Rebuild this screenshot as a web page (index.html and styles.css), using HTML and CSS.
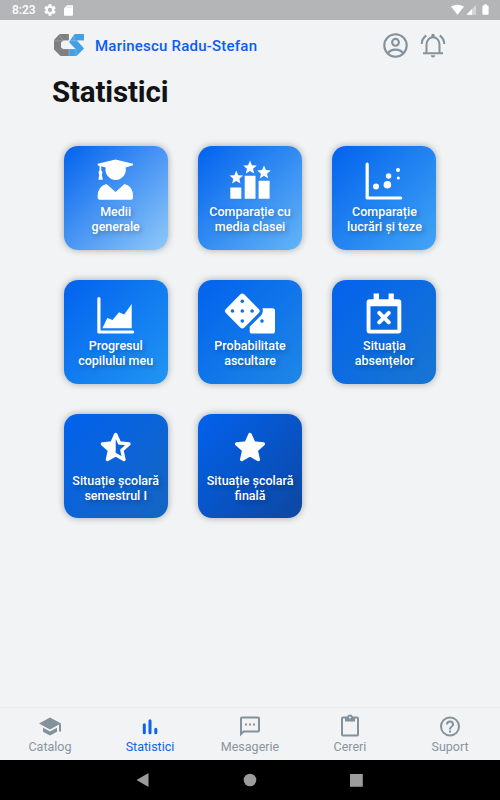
FILE: index.html
```
<!DOCTYPE html>
<html lang="ro">
<head>
<meta charset="utf-8">
<title>Statistici</title>
<link rel="stylesheet" href="styles.css">
</head>
<body>
<div class="statusbar">
  <span class="clock">8:23</span>
  <svg class="gear" width="12" height="12" viewBox="2 2 20 20"><path d="M19.14 12.94c.04-.3.06-.61.06-.94 0-.32-.02-.64-.07-.94l2.03-1.58a.49.49 0 0 0 .12-.61l-1.92-3.32a.49.49 0 0 0-.59-.22l-2.39.96c-.5-.38-1.03-.7-1.62-.94l-.36-2.54a.48.48 0 0 0-.48-.41h-3.84c-.24 0-.43.17-.47.41l-.36 2.54c-.59.24-1.13.57-1.62.94l-2.39-.96a.48.48 0 0 0-.59.22L2.74 8.87c-.12.21-.08.47.12.61l2.03 1.58c-.05.3-.09.63-.09.94s.02.64.07.94l-2.03 1.58a.49.49 0 0 0-.12.61l1.92 3.32c.12.22.37.29.59.22l2.39-.96c.5.38 1.03.7 1.62.94l.36 2.54c.05.24.24.41.48.41h3.84c.24 0 .44-.17.47-.41l.36-2.54c.59-.24 1.13-.56 1.62-.94l2.39.96c.22.08.47 0 .59-.22l1.92-3.32a.48.48 0 0 0-.12-.61zM12 15.6a3.6 3.6 0 1 1 0-7.2 3.6 3.6 0 0 1 0 7.2z"/></svg>
  <svg class="sd" width="9" height="11" viewBox="0 0 9 11"><path d="M3 .3h5.2q.8 0 .8.8v8.8q0 .8-.8.8H.8q-.8 0-.8-.8V3.3z"/><path class="sd-pins" d="M3.2 1.5v1.3M5 1.5v1.3M6.8 1.5v1.3"/></svg>
  <svg class="signals" width="38" height="12" viewBox="0 0 38 12"><path d="M0 2.600Q6.500-1.200 13 2.600L6.500 10.700z"/><path opacity=".45" d="M25 1v9.700H15.500z"/><path d="M21 5v5.700h-5.500z"/><path d="M33.200.2h2.600v1.200h1.100q.7 0 .7.700v8q0 .7-.7.700h-4.800q-.7 0-.7-.7v-8q0-.7.700-.7h1.100z"/></svg>
</div>

<header class="header">
  <svg class="logo" width="30" height="22" viewBox="0 0 30 22">
    <path fill="#808080" d="M5.500 0H15v6.500H9.500L7 8.500v5l2.500 1.500H15V22H6.500L0 15.500V6z"/>
    <path fill="#439fe6" d="M20.500 0H30v6.500h-7l7 8-7.500 7.500H15v-7h6.500L15 8z"/>
    <path fill="none" stroke="#fff" stroke-opacity=".35" stroke-width=".6" d="M0 6.800H29M15 0v22M7 15H22M5 0l4 6.500M20 0v7M22 15v7"/>
  </svg>
  <span class="name">Marinescu Radu-Stefan</span>
  <svg class="user" width="25" height="25" viewBox="0 0 25 25"><circle cx="12.500" cy="12.500" r="11.200"/><circle cx="12.500" cy="9.300" r="3.400"/><path d="M5 20.300c1.600-2.600 4.700-3.700 7.500-3.700s5.900 1.100 7.500 3.700"/></svg>
  <svg class="bell" width="26" height="25" viewBox="0 0 26 25"><path d="M3 20.300h20M6.500 20V11.500a6.500 7.300 0 0 1 13 0V20M1.700 11q.2-5.200 4.500-8.600M24.300 11q-.2-5.200-4.500-8.600"/><path class="solid" d="M11.300 4V2.500a1.700 1.700 0 0 1 3.400 0V4zM10.700 22.300h4.600q-.4 2.200-2.300 2.200t-2.300-2.200z"/></svg>
</header>

<main class="content">
  <h1>Statistici</h1>
  <div class="grid">
    <a class="tile t1"><svg viewBox="22 8 60 48"><path d="M33.700 17.700 51.500 13.500 69 17.700V19.300L61.600 21.500A10.200 10.200 0 1 1 41.700 21.500L37.300 20.200V24.500L38.500 26 37.900 29 38.800 33.700H34.400L35.200 29 34.500 26 35.500 24.500V20L33.700 19.300z"/><path d="M42.500 38 51.600 46 60.500 38Q69 40.300 69 50V51.700Q69 53.700 67 53.700H35.700Q33.700 53.700 33.700 51.700V50Q33.700 40.300 42.500 38z"/></svg><span>Medii<br>generale</span></a>
    <a class="tile t2"><svg viewBox="22 8 60 48"><defs><path id="star" d="M0-7 1.900-2.400 6.800-2.100 3 1.200 4.200 6 0 3.300-4.200 6-3 1.200-6.800-2.100-1.900-2.400z"/></defs><path d="M32.300 41.400h11v11.300h-11zM46.700 29.700h10.800v23H46.700zM60.600 34.700h11v18h-11z"/><use href="#star" x="38.300" y="31.600"/><use href="#star" x="52" y="21.600"/><use href="#star" x="66" y="26.500"/></svg><span>Comparație cu<br>media clasei</span></a>
    <a class="tile t3"><svg viewBox="22 8 60 48"><path class="axis" d="M35.200 18.200V52H68.700"/><circle cx="44" cy="40.400" r="3"/><circle cx="56.600" cy="30" r="2.700"/><circle cx="55.400" cy="38.700" r="3.800"/><circle cx="66" cy="24" r="2"/><circle cx="66.300" cy="32" r="1.600"/></svg><span>Comparație<br>lucrări și teze</span></a>
    <a class="tile t4"><svg viewBox="22 8 60 48"><path class="axis" d="M34.900 18.500V52H68.600"/><path d="M38.300 48.300 43.400 38 48.500 39.900 55 32.300 60.200 34.500 67.700 24V48.300z"/></svg><span>Progresul<br>copilului meu</span></a>
    <a class="tile t5"><svg viewBox="22 8 60 48"><path fill-rule="evenodd" d="M64.500 28.200H74.500Q77 28.200 77 30.700V51Q77 53.600 74.500 53.600H54Q51.700 53.600 51.700 51V46.800L63.200 35.200Q65.500 32.500 64.500 28.200zM64 39.300a1.800 1.800 0 1 0 0 3.600 1.800 1.800 0 0 0 0-3.600z"/><rect x="31.200" y="17.900" width="26.200" height="26.200" rx="3" transform="rotate(45 44.300 31)"/><g class="pips"><circle cx="44.300" cy="21.300" r="1.800"/><circle cx="34.500" cy="31" r="1.800"/><circle cx="44.300" cy="31" r="1.800"/><circle cx="54.100" cy="31" r="1.800"/><circle cx="44.300" cy="41" r="1.800"/></g></svg><span>Probabilitate<br>ascultare</span></a>
    <a class="tile t6"><svg viewBox="22 8 60 48"><path fill-rule="evenodd" d="M41.600 13.600H47V19.300H56.600V13.600H61.800V19.300H66.300Q69.300 19.300 69.300 22.300V50.600Q69.300 53.600 66.300 53.600H37.600Q34.600 53.600 34.600 50.600V22.300Q34.600 19.300 37.600 19.300H41.600zM38.500 26.300V49.700H65.400V26.300z"/><path class="cross" d="M47.200 32.800 56.800 42.400M56.800 32.800 47.200 42.400"/></svg><span>Situația<br>absențelor</span></a>
    <a class="tile t7"><svg viewBox="22 8 60 48"><path class="outline" d="M51.700 20.500 55.500 29 65 29.900 57.900 36.200 60 45.500 51.700 40.700 43.400 45.500 45.500 36.200 38.400 29.900 47.900 29z"/><path d="M51.700 20.500V40.700L43.400 45.500 45.500 36.200 38.400 29.900 47.900 29z"/></svg><span>Situație școlară<br>semestrul I</span></a>
    <a class="tile t8"><svg viewBox="22 8 60 48"><path class="outline full" d="M52 20.500 55.800 29 65.300 29.900 58.200 36.200 60.300 45.500 52 40.700 43.700 45.500 45.800 36.200 38.700 29.900 48.200 29z"/></svg><span>Situație școlară<br>finală</span></a>
  </div>
</main>

<nav class="tabs">
  <a><svg viewBox="0 0 24 24"><path d="M5 13.180v4L12 21l7-3.820v-4L12 17zM12 3 1 9l11 6 9-4.910V17h2V9z"/></svg>Catalog</a>
  <a class="active"><svg viewBox="0 0 24 24"><path class="round" d="M6.300 10.300v7.900M12 6.300v11.900M17.800 14.700v3.500"/></svg>Statistici</a>
  <a><svg viewBox="0 0 24 24"><path d="M20 2H4a2 2 0 0 0-2 2v18l4-4h14a2 2 0 0 0 2-2V4a2 2 0 0 0-2-2zm0 14H5.200L4 17.200V4h16zM7 9h2v2H7zm4 0h2v2h-2zm4 0h2v2h-2z"/></svg>Mesagerie</a>
  <a><svg viewBox="0 0 24 24"><path d="M19 2h-4.180C14.400.84 13.300 0 12 0S9.600.84 9.180 2H5a2 2 0 0 0-2 2v16a2 2 0 0 0 2 2h14a2 2 0 0 0 2-2V4a2 2 0 0 0-2-2zm-7 0a1 1 0 1 1 0 2 1 1 0 0 1 0-2zm7 18H5V4h2v3h10V4h2z"/></svg>Cereri</a>
  <a><svg viewBox="0 0 24 24"><path d="M11 18h2v-2h-2zm1-16a10 10 0 1 0 0 20 10 10 0 0 0 0-20zm0 18a8 8 0 1 1 0-16 8 8 0 0 1 0 16zm0-14a4 4 0 0 0-4 4h2a2 2 0 1 1 4 0c0 2-3 1.750-3 5h2c0-2.250 3-2.500 3-5a4 4 0 0 0-4-4z"/></svg>Suport</a>
</nav>
<div class="sysnav">
  <svg width="228" height="16" viewBox="0 0 228 16"><path d="M.5 8 12.500 1v14z"/><circle cx="114" cy="8" r="6.300"/><rect x="214" y="2" width="12.800" height="12.800" rx=".5"/></svg>
</div>
</body>
</html>
```
FILE: styles.css
```
* { box-sizing: border-box; }
body {
  margin: 0;
  width: 500px;
  height: 800px;
  display: flex;
  flex-direction: column;
  overflow: hidden;
  background: #f1f3f5;
  font-family: Roboto, "Liberation Sans", sans-serif;
}
svg { display: block; flex: none; }

.statusbar {
  height: 20px;
  background: #b4b5b7;
  color: #fff;
  fill: #fff;
  display: flex;
  align-items: center;
  padding: 0 11px 0 12px;
}
.clock { font-size: 12px; font-weight: 500; width: 32px; }
.sd { margin-left: 8px; }
.sd-pins { stroke: #b4b5b7; stroke-width: .6; }
.signals { margin-left: auto; margin-top: -1px; }

.header {
  height: 50px;
  display: flex;
  align-items: center;
  padding: 0 54px;
}
.logo { margin-top: -1px; }
.name {
  margin: 1px 0 0 11px;
  color: #0b5df0;
  font-size: 15px;
  font-weight: 500;
  letter-spacing: .22px;
}
.user, .bell { fill: none; stroke: #84929c; stroke-width: 2; stroke-linecap: butt; }
.user { margin-left: auto; stroke-width: 2.1; }
.bell { margin-left: 12px; }
.bell .solid { fill: #84929c; stroke: none; }

.content { flex: 1; padding: 0 52px; }
h1 {
  margin: 4px 0 0;
  font-size: 29.500px;
  line-height: 36px;
  font-weight: 700;
  letter-spacing: -.15px;
  color: #121314;
}
.grid {
  margin: 35.700px 0 0 11.700px;
  display: grid;
  grid-template-columns: repeat(3, 104px);
  grid-auto-rows: 104px;
  gap: 30.400px;
}
.tile {
  border-radius: 14px;
  padding-top: 8px;
  background: linear-gradient(135deg, #0262ee, var(--end));
  box-shadow: 0 0 7px rgba(0, 0, 0, .32);
  color: #fff;
  font-size: 12.500px;
  line-height: 15px;
  font-weight: 500;
  text-align: center;
  text-shadow: 2px 2px 5px rgba(0, 0, 0, .28);
  white-space: nowrap;
}
.tile svg { width: 60px; height: 48px; margin: 0 auto 2.200px; fill: #fff; }
.tile span { display: block; }
.t1 { --end: #90caf9; }
.t2 { --end: #64b5f6; }
.t3 { --end: #42a5f5; }
.t4 { --end: #2196f3; }
.t5 { --end: #1e88e5; }
.t6 { --end: #1976d2; }
.t7 { --end: #1565c0; }
.t8 { --end: #0d47a1; }
.tile .axis { fill: none; stroke: #fff; stroke-width: 3.200; stroke-linecap: round; stroke-linejoin: round; }
.tile .pips { fill: #0d6feb; }
.tile .cross { fill: none; stroke: #fff; stroke-width: 4; stroke-linecap: round; }
.tile .outline { fill: none; stroke: #fff; stroke-width: 3.400; stroke-linejoin: round; }
.tile .full { fill: #fff; }

.tabs {
  height: 53px;
  border-top: 1px solid #e9ebed;
  display: grid;
  grid-template-columns: repeat(5, 100px);
  color: #8a959e;
  font-size: 12.500px;
  line-height: 15px;
  text-align: center;
}
.tabs a { padding-top: 6px; }
.tabs svg { width: 24px; height: 25px; margin: 0 auto; fill: #84929c; }
.tabs .active { color: #0d62f0; }
.round { fill: none; stroke: #0d62f0; stroke-width: 3; stroke-linecap: round; }
.sysnav {
  height: 40px;
  background: #000;
  fill: #9c9c9c;
  display: flex;
  align-items: center;
  padding-left: 136px;
}
```
